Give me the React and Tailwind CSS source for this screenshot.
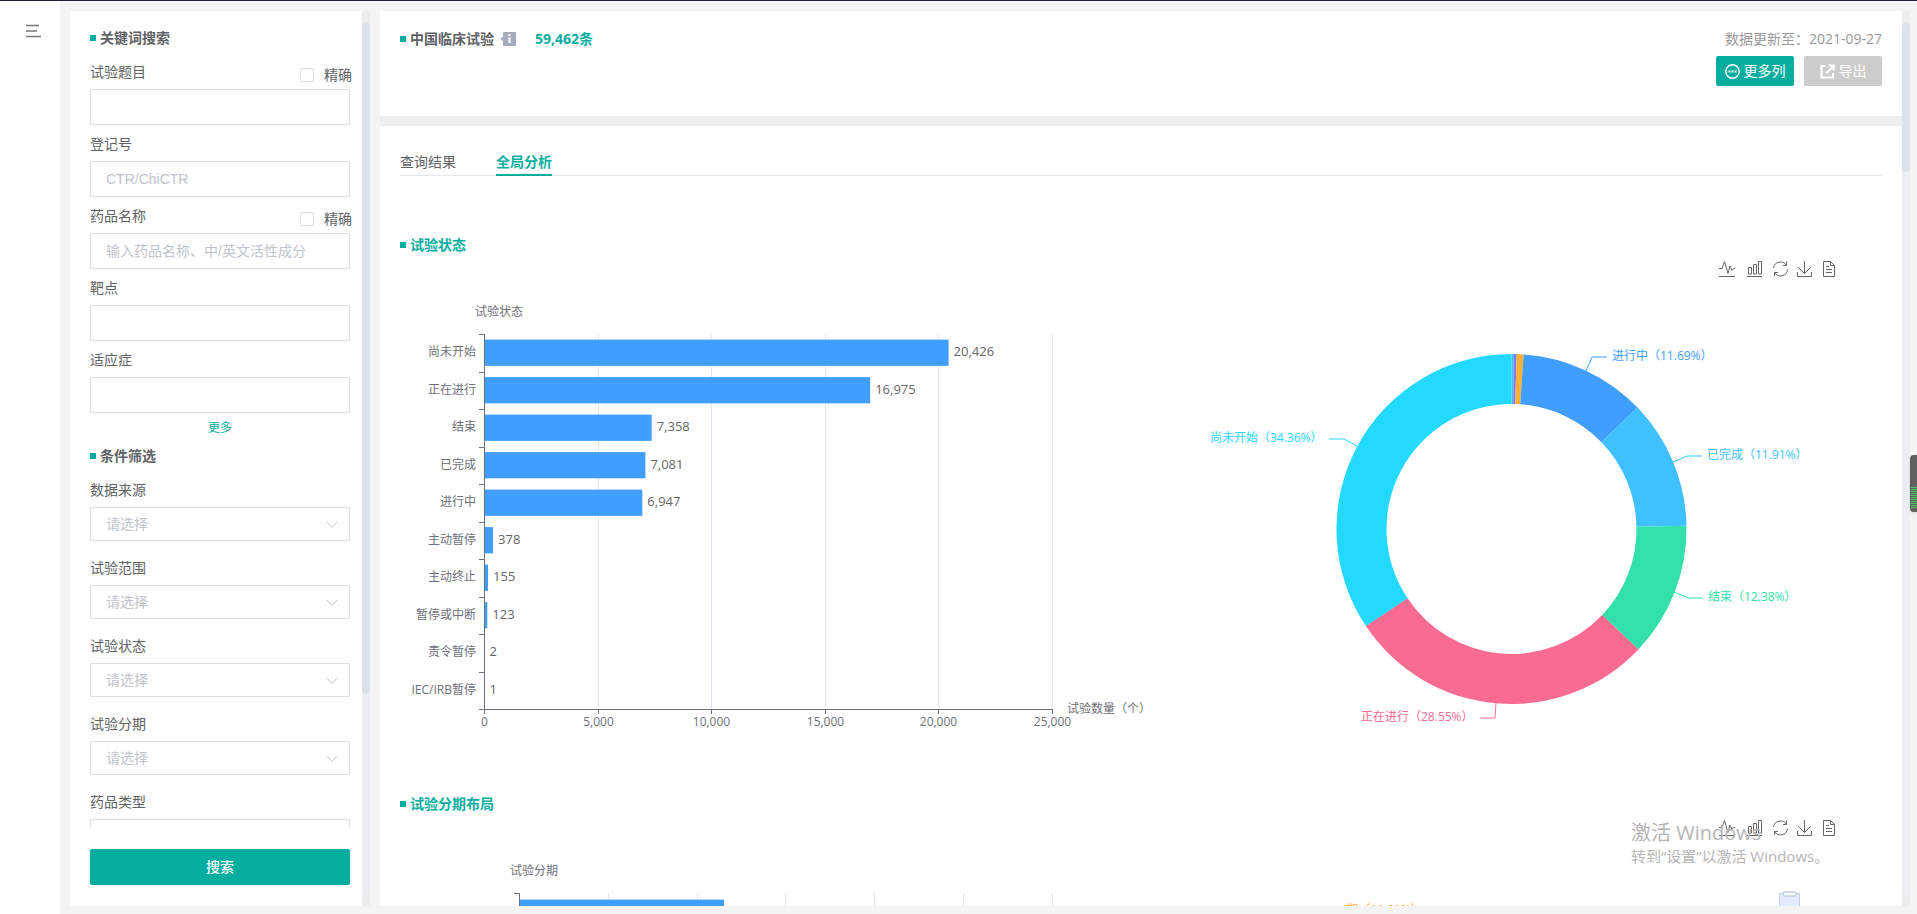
const statusRows = [
  { name: "尚未开始", value: 20426 },
  { name: "正在进行", value: 16975 },
  { name: "结束", value: 7358 },
  { name: "已完成", value: 7081 },
  { name: "进行中", value: 6947 },
  { name: "主动暂停", value: 378 },
  { name: "主动终止", value: 155 },
  { name: "暂停或中断", value: 123 },
  { name: "责令暂停", value: 2 },
  { name: "IEC/IRB暂停", value: 1 },
];

const statusTicks = ["0", "5,000", "10,000", "15,000", "20,000", "25,000"];

const pieRows = [
  { value: 3, color: "#23d9ff" },
  { value: 123, color: "#40c1ff" },
  { value: 155, color: "#8278f0" },
  { value: 378, color: "#ffb136" },
  { value: 6947, color: "#409eff" },
  { value: 7081, color: "#40c1ff" },
  { value: 7358, color: "#34e0aa" },
  { value: 16975, color: "#fa6b91" },
  { value: 20426, color: "#23d9ff" },
];

const pieLabels = [
  { text: "进行中（11.69%）", x: 471, y: 101, color: "#409eff", line: "M445 116 L451 102 H466" },
  { text: "已完成（11.91%）", x: 566, y: 200, color: "#40c1ff", line: "M532 207 L546 201 H561" },
  { text: "结束（12.38%）", x: 567, y: 342, color: "#34e0aa", line: "M533 337 L547 343 H562" },
  { text: "正在进行（28.55%）", x: 220, y: 462, color: "#fa6b91", line: "M355 448 L354 463 H339" },
  { text: "尚未开始（34.36%）", x: 69, y: 183, color: "#23d9ff", line: "M216 191 L203 184 H188" },
];

const selects = ["数据来源", "试验范围", "试验状态", "试验分期", "药品类型"];

function SectionTitle({ children, className = "text-[#606266]" }) {
  return (
    <h2 className={`flex h-5 items-center gap-1 text-sm font-bold ${className}`}>
      <span className="size-1.5 bg-[#07ae9f]" />
      {children}
    </h2>
  );
}

function Field({ id, label, placeholder, exact }) {
  return (
    <div className="mb-[9px]">
      <div className="mb-[7px] flex h-5 items-start justify-between">
        <label htmlFor={id} className="leading-5">{label}</label>
        {exact && (
          <label className="-mr-0.5 flex h-[26px] items-center gap-2.5">
            <input
              type="checkbox"
              className="size-3.5 appearance-none rounded-xs border border-[#dcdfe6] bg-white"
            />
            精确
          </label>
        )}
      </div>
      <input
        id={id}
        type="text"
        placeholder={placeholder}
        className="block h-9 w-full rounded-xs border border-[#dcdfe6] px-[15px] font-['Liberation_Sans','Noto_Sans_CJK_SC',sans-serif] text-sm outline-none placeholder:text-[#c0c4cc]"
      />
    </div>
  );
}

function SelectField({ id, label }) {
  return (
    <div className="mb-[17px]">
      <label htmlFor={id} className="mb-[7px] block h-5 leading-5">{label}</label>
      <div className="relative">
        <select
          id={id}
          className="block h-[34px] w-full appearance-none rounded-xs border border-[#dcdfe6] bg-white px-[15px] text-sm text-[#c0c4cc] outline-none"
        >
          <option>请选择</option>
        </select>
        <svg className="pointer-events-none absolute top-3.5 right-3 h-2 w-3" viewBox="0 0 12 8" fill="none" stroke="#c0c4cc">
          <path d="M1 1 L6 6.5 L11 1" />
        </svg>
      </div>
    </div>
  );
}

function Sidebar() {
  return (
    <aside className="flex w-[292px] shrink-0 flex-col bg-white text-sm text-[#606266]">
      <div className="min-h-0 flex-1 overflow-hidden pt-[17px] pr-3 pl-5">
        <div className="w-[260px]">
          <SectionTitle>关键词搜索</SectionTitle>
          <div className="mt-3.5">
            <Field id="title" label="试验题目" exact />
            <Field id="regNo" label="登记号" placeholder="CTR/ChiCTR" />
            <Field id="drug" label="药品名称" placeholder="输入药品名称、中/英文活性成分" exact />
            <Field id="target" label="靶点" />
            <Field id="indication" label="适应症" />
          </div>
          <button type="button" className="-mt-1 mb-2 block h-5 w-full text-center text-xs text-[#07ae9f]">
            更多
          </button>
          <SectionTitle>条件筛选</SectionTitle>
          <div className="mt-3.5">
            {selects.map((label, i) => (
              <SelectField key={label} id={`filter-${i}`} label={label} />
            ))}
          </div>
        </div>
      </div>
      <div className="px-5 py-[21px]">
        <button type="button" className="block h-9 w-[260px] rounded-xs bg-[#07ae9f] text-sm font-medium text-white">
          搜索
        </button>
      </div>
    </aside>
  );
}

function ScrollBar({ thumb }) {
  return (
    <div className="flex w-2 shrink-0 flex-col bg-[#ebeff3]">
      <div className="h-3 bg-[#ededed]" />
      <div className="min-h-0 flex-1">
        <div className={`rounded bg-[#dde1ea] ${thumb}`} />
      </div>
      <div className="h-3 bg-[#ededed]" />
    </div>
  );
}

function Toolbox() {
  return (
    <g fill="none" stroke="#666">
      <path d="M578 13.5 H581 L583.5 6.5 L587 18.500 L589 11 L591 15.500 L592.500 13.500 H594 M578 21.5 H594" />
      <path d="M607.500 12.5 H610.500 V19 H607.500 Z M612.500 9.5 H615.500 V19 H612.500 Z M617.5 6.5 H620.5 V19 H617.5 Z M606 21.5 H621" />
      <path d="M632.500 13 A7 7 0 0 1 645.500 10.500 M645.500 6.500 V10.500 H642 M646.500 14.500 A7 7 0 0 1 633.500 17.500 M633.500 21 V17.500 H637" />
      <path d="M663.500 6 V18 M657.500 12.500 L663.500 18.500 L669.500 12.500 M656.500 17 V21.500 H670.500 V17" />
      <path d="M682.500 6.500 H689.500 L693.500 10.500 V21.500 H682.500 Z M689.500 6.500 V10.500 H693.500 M685 11.500 H688 M685 14.500 H691 M685 17.500 H691" />
    </g>
  );
}

function StatusBar() {
  const left = 84.5;
  const step = 37.5;
  const scale = 568 / 25000;

  return (
    <svg viewBox="0 0 741 539" className="block w-1/2 overflow-visible text-xs" fill="#6e7079">
      <text x="75" y="61">试验状态</text>
      {statusTicks.map((tick, i) => {
        const x = Math.round(84 + i * 113.6) + 0.5;
        return (
          <g key={tick}>
            {i > 0 && <path d={`M${x} 79 V454`} stroke="#e0e6f1" />}
            <path d={`M${x} 454 v5`} stroke="#6e7079" />
            <text x={x} y="471" textAnchor="middle">{tick}</text>
          </g>
        );
      })}
      {statusRows.map((row, i) => {
        const top = 79 + i * step;
        return (
          <g key={row.name}>
            <path d={`M79 ${Math.round(top) + 0.5} h5`} stroke="#6e7079" />
            <rect x={left} y={top + 5.6} width={row.value * scale} height="26.25" fill="#409eff" />
            <text x="76" y={top + 22} textAnchor="end">{row.name}</text>
            <text x={left + row.value * scale + 5} y={top + 22} className="text-[13px]" fill="#666">
              {row.value.toLocaleString("en-US")}
            </text>
          </g>
        );
      })}
      <path d="M84.5 79 V454.5 M79 454.5 H653" fill="none" stroke="#6e7079" />
      <text x="667" y="458">试验数量（个）</text>
    </svg>
  );
}

function StatusPie() {
  const cx = 370.5;
  const cy = 274;
  const total = pieRows.reduce((sum, row) => sum + row.value, 0);
  const point = (r, share) => {
    const a = share * Math.PI * 2;
    return `${cx + r * Math.sin(a)} ${cy - r * Math.cos(a)}`;
  };
  let sum = 0;

  return (
    <svg viewBox="0 0 741 539" className="block w-1/2 text-xs">
      <Toolbox />
      {pieRows.map((row, i) => {
        const from = sum / total;
        sum += row.value;
        const to = sum / total;
        return (
          <path
            key={i}
            fill={row.color}
            d={`M${point(175, from)} A175 175 0 0 1 ${point(175, to)} L${point(125, to)} A125 125 0 0 0 ${point(125, from)} Z`}
          />
        );
      })}
      {pieLabels.map((label) => (
        <g key={label.text}>
          <path d={label.line} fill="none" stroke={label.color} />
          <text x={label.x} y={label.y + 4} fill={label.color}>{label.text}</text>
        </g>
      ))}
    </svg>
  );
}

function PhaseBar() {
  return (
    <svg viewBox="0 0 741 539" className="block w-1/2 text-xs" fill="#6e7079">
      <text x="110" y="61">试验分期</text>
      {[1, 2, 3, 4, 5, 6].map((i) => (
        <path key={i} d={`M${Math.round(119 + i * 88.8) + 0.5} 79 V454`} stroke="#e0e6f1" />
      ))}
      <rect x="119.5" y="85.6" width="204.5" height="30" fill="#409eff" />
      <path d="M114 79.5 H119.5 V454" fill="none" stroke="#6e7079" />
    </svg>
  );
}

function PhasePie() {
  return (
    <svg viewBox="0 0 741 539" className="block w-1/2 text-xs">
      <Toolbox />
      <text x="202" y="100" fill="#ffb136">I期（11.01%）</text>
    </svg>
  );
}

function Header() {
  return (
    <header className="flex h-[105px] shrink-0 items-start justify-between bg-white px-5 pt-[18px] text-sm">
      <div className="flex items-center">
        <SectionTitle>中国临床试验</SectionTitle>
        <svg className="ml-1.5 h-3.5 w-4" viewBox="0 0 16 14">
          <path d="M4 0 H15 Q16 0 16 1 V13 Q16 14 15 14 H4 Q3 14 3 13 V9 L0 6.500 L3 5 V1 Q3 0 4 0 Z" fill="#a6abbf" />
          <path d="M8.500 2 h2 v2 h-2 Z M8 5.500 h2.500 V11 h-2 V6.500 H8 Z" fill="#fff" />
        </svg>
        <span className="ml-[19px] font-bold text-[#07ae9f]">59,462条</span>
      </div>
      <div className="flex flex-col items-end gap-[7px]">
        <p className="leading-5 text-[#999]">数据更新至：2021-09-27</p>
        <div className="flex gap-2.5">
          <button type="button" className="flex h-[30px] w-[78px] items-center justify-center gap-1 rounded-xs bg-[#07ae9f] text-white">
            <svg className="size-[15px]" viewBox="0 0 15 15">
              <circle cx="7.5" cy="7.5" r="6.7" fill="none" stroke="#fff" strokeWidth="1.400" />
              <path d="M3.500 6.500 h2 v2 h-2 Z M6.500 6.500 h2 v2 h-2 Z M9.500 6.500 h2 v2 h-2 Z" fill="#fff" />
            </svg>
            更多列
          </button>
          <button type="button" className="flex h-[30px] w-[78px] items-center justify-center gap-1 rounded-xs bg-[#ccc] text-white">
            <svg className="size-[15px]" viewBox="0 0 15 15" fill="none" stroke="#fff" strokeWidth="2">
              <path d="M6 2 H1.500 V13.500 H13 V9 M6 9.500 L13 2.500 M8.500 1.500 H13.800 V6.500" />
            </svg>
            导出
          </button>
        </div>
      </div>
    </header>
  );
}

function Analysis() {
  return (
    <main className="min-h-0 flex-1 overflow-hidden bg-white px-5 pt-[22px]">
      <nav className="flex h-7 gap-10 border-b border-[#e4e7ed] text-sm">
        <button type="button" className="h-7 text-[#606266]">查询结果</button>
        <button type="button" className="h-7 border-b-2 border-[#07ae9f] pt-0.5 font-bold text-[#07ae9f]">
          全局分析
        </button>
      </nav>
      <section className="mt-[59px]">
        <SectionTitle className="text-[#07ae9f]">试验状态</SectionTitle>
        <div className="flex">
          <StatusBar />
          <StatusPie />
        </div>
      </section>
      <section>
        <SectionTitle className="text-[#07ae9f]">试验分期布局</SectionTitle>
        <div className="flex">
          <PhaseBar />
          <PhasePie />
        </div>
      </section>
    </main>
  );
}

export default function App() {
  return (
    <div className="relative flex h-screen overflow-hidden border-t border-[#1f2030] bg-[#f4f4f4] font-['Open_Sans','Noto_Sans_CJK_SC',sans-serif]">
      <div className="w-[60px] shrink-0 bg-white pt-[23px] pl-[26px]">
        <button type="button" aria-label="菜单" className="block">
          <svg className="h-3.5 w-4" viewBox="0 0 16 14" stroke="#777" strokeWidth="1.500">
            <path d="M0 1.500 H13 M0 7 H11 M0 12.500 H15" />
          </svg>
        </button>
      </div>

      <div className="flex min-w-0 flex-1 gap-2.5 pt-2.5 pr-[7px] pb-2 pl-2.5">
        <div className="flex">
          <Sidebar />
          <ScrollBar thumb="h-[77%]" />
        </div>
        <div className="flex min-w-0 flex-1">
          <div className="flex min-w-0 flex-1 flex-col gap-2.5 bg-[#eee]">
            <Header />
            <Analysis />
          </div>
          <ScrollBar thumb="h-[149px]" />
        </div>
      </div>

      {/* floating clipboard helper */}
      <svg className="absolute right-[117px] bottom-2 h-[15px] w-[21px]" viewBox="0 0 21 15">
        <path d="M0.500 2.500 H20.500 V16 H0.500 Z" fill="#e4ebfc" stroke="#c3cee6" />
        <rect x="4" y="1" width="13" height="4" rx="2" fill="#fff" stroke="#c3cee6" strokeWidth="1.500" />
      </svg>

      {/* system activation notice */}
      <div className="pointer-events-none absolute right-[85px] bottom-[46px] w-[201px] whitespace-nowrap text-[#b5b5b5]">
        <p className="text-xl leading-[22px]">激活 Windows</p>
        <p className="text-[15px] leading-6">转到“设置”以激活 Windows。</p>
      </div>

      {/* battery style handle on the window edge */}
      <div className="absolute top-[454px] right-0 flex h-[57px] w-[7px] flex-col justify-end gap-px rounded-l bg-[#606060] pb-1 pl-px shadow">
        {[...Array(11)].map((_, i) => (
          <span key={i} className="h-px bg-[#4cc764]" />
        ))}
      </div>
    </div>
  );
}
